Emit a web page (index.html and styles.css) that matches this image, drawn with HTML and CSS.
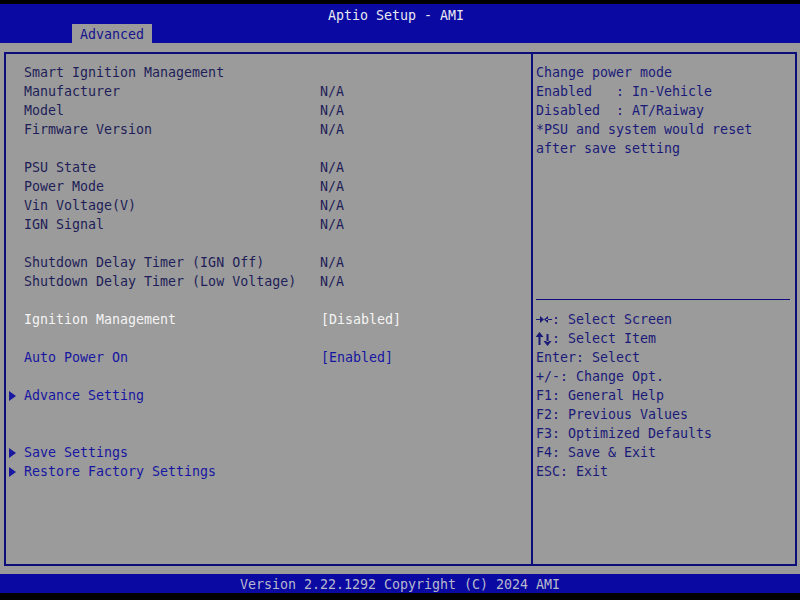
FILE: index.html
```html
<html lang="en">
<head>
  <title>Aptio Setup - AMI</title>
  <link rel="stylesheet" href="styles.css">
</head>
<body>
<div class="header">
  <div class="title">Aptio Setup - AMI</div>
  <div class="tabs"><span class="tab">Advanced</span></div>
</div>

<div class="frame">
  <div class="menu">
    <div class="row"><span></span><span>Smart Ignition Management</span></div>
    <div class="row"><span></span><span>Manufacturer</span><span>N/A</span></div>
    <div class="row"><span></span><span>Model</span><span>N/A</span></div>
    <div class="row"><span></span><span>Firmware Version</span><span>N/A</span></div>
    <div class="row"></div>
    <div class="row"><span></span><span>PSU State</span><span>N/A</span></div>
    <div class="row"><span></span><span>Power Mode</span><span>N/A</span></div>
    <div class="row"><span></span><span>Vin Voltage(V)</span><span>N/A</span></div>
    <div class="row"><span></span><span>IGN Signal</span><span>N/A</span></div>
    <div class="row"></div>
    <div class="row"><span></span><span>Shutdown Delay Timer (IGN Off)</span><span>N/A</span></div>
    <div class="row"><span></span><span>Shutdown Delay Timer (Low Voltage)</span><span>N/A</span></div>
    <div class="row"></div>
    <div class="row active"><span></span><span>Ignition Management</span><span class="opt">[Disabled]</span></div>
    <div class="row"></div>
    <div class="row item"><span></span><span>Auto Power On</span><span class="opt">[Enabled]</span></div>
    <div class="row"></div>
    <div class="row item"><span class="arrow"><svg width="7" height="10" viewBox="0 0 7 10"><polygon points="0,0 7,5 0,10"/></svg></span><span>Advance Setting</span></div>
    <div class="row"></div>
    <div class="row"></div>
    <div class="row item"><span class="arrow"><svg width="7" height="10" viewBox="0 0 7 10"><polygon points="0,0 7,5 0,10"/></svg></span><span>Save Settings</span></div>
    <div class="row item"><span class="arrow"><svg width="7" height="10" viewBox="0 0 7 10"><polygon points="0,0 7,5 0,10"/></svg></span><span>Restore Factory Settings</span></div>
  </div>

  <div class="side">
    <div class="help">
      <div class="line">Change power mode</div>
      <div class="line">Enabled   : In-Vehicle</div>
      <div class="line">Disabled  : AT/Raiway</div>
      <div class="line">*PSU and system would reset</div>
      <div class="line">after save setting</div>
    </div>
    <div class="keys">
      <div class="line"><svg class="sym" width="16" height="19" viewBox="0 0 16 19"><path d="M0 9h6v1H0z M4 6l4 3.5L4 13z M10 9h6v1h-6z M12 6l-4 3.5L12 13z"/></svg>: Select Screen</div>
      <div class="line"><svg class="sym" width="16" height="19" viewBox="0 0 16 19"><path d="M2.5 8h2v8h-2z M3.5 3l4 5h-8z M10.5 5h2v8h-2z M11.5 17l4-5h-8z"/></svg>: Select Item</div>
      <div class="line">Enter: Select</div>
      <div class="line">+/-: Change Opt.</div>
      <div class="line">F1: General Help</div>
      <div class="line">F2: Previous Values</div>
      <div class="line">F3: Optimized Defaults</div>
      <div class="line">F4: Save &amp; Exit</div>
      <div class="line">ESC: Exit</div>
    </div>
  </div>
</div>

<div class="footer">Version 2.22.1292 Copyright (C) 2024 AMI</div>
</body>
</html>
```

FILE: styles.css
```css
html {
    margin: 0;
    padding: 0;
}

body {
    margin: 0;
    width: 800px;
    height: 600px;
    overflow: hidden;
    background: #9b9b9b;
    font: 13.3px/19px "DejaVu Sans Mono", "Liberation Mono", monospace;
    color: #1e1e58;
    display: flex;
    flex-direction: column;
}

.header {
    height: 39px;
    border-top: 4px solid #000;
    background: #0a0aa2;
    display: flex;
    flex-direction: column;
}

.title {
    height: 20px;
    line-height: 24px;
    padding-right: 8px;
    text-align: center;
    color: #e8e8f0;
}

.tabs {
    padding-left: 72px;
    display: flex;
}

.tab {
    width: 80px;
    height: 19px;
    line-height: 21px;
    padding-left: 8px;
    box-sizing: border-box;
    background: #9b9b9b;
    color: #14148c;
}

.frame {
    margin: 9px 3px 0 4px;
    height: 514px;
    box-sizing: border-box;
    border: 2px solid #0c0c7a;
    display: grid;
    grid-template-columns: 525px 2px 1fr;
}

.menu {
    padding-top: 9px;
    grid-column: 1;
}

.row {
    height: 19px;
    display: grid;
    grid-template-columns: 18px 296px 1fr;
    white-space: pre;
}

.row .arrow {
    display: flex;
    align-items: center;
    padding-left: 3px;
}

.arrow svg {
    fill: #1818a0;
}

.item {
    color: #1616a0;
}

.active {
    color: #f4f4f4;
}

.opt {
    padding-left: 1px;
}

.side {
    grid-column: 3;
    border-left: 2px solid #0c0c7a;
    margin-left: -2px;
    padding: 9px 3px 0 3px;
    display: flex;
    flex-direction: column;
}

.line {
    height: 19px;
    display: flex;
    white-space: pre;
    color: #1a1a78;
}

.help {
    height: 236px;
    border-bottom: 1px solid #0c0c7a;
    margin-right: 2px;
}

.keys {
    padding-top: 10px;
}

.sym {
    fill: #1a1a78;
}

.footer {
    margin-top: 8px;
    height: 19px;
    line-height: 22px;
    border-bottom: 7px solid #000;
    background: #0a0aa2;
    color: #b8b8cc;
    text-align: center;
}
```
